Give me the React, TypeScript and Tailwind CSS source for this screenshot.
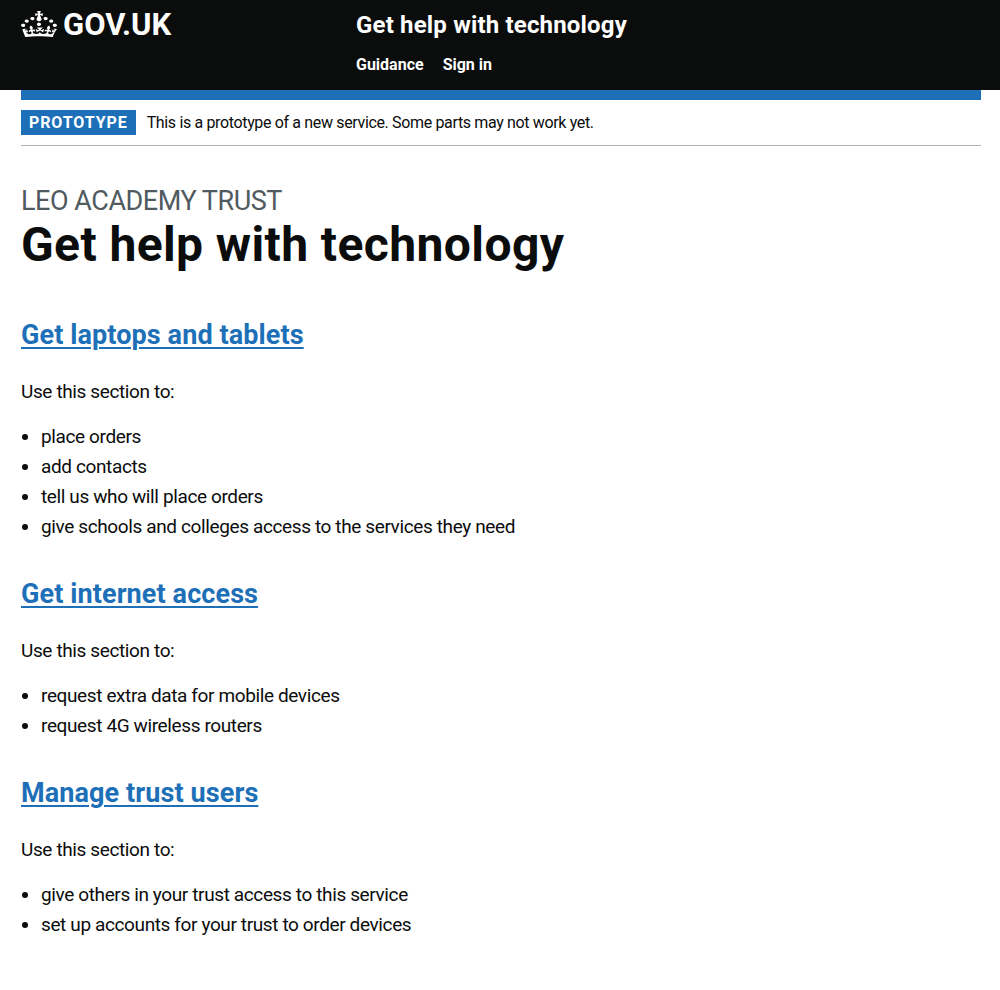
const Section = ({ title, items }: { title: string; items: string[] }) => (
  <section className="mb-[40px]">
    <h2 className="mb-[28px] text-[27px] leading-[31px] font-bold tracking-[0.1px]">
      <a href="#" className="text-[#1d70b8] underline decoration-2 underline-offset-[3px]">{title}</a>
    </h2>
    <p className="mb-[20px] text-[19px] leading-[25px] tracking-[-0.38px]">Use this section to:</p>
    <ul className="list-disc pl-5">
      {items.map((item) => (
        <li key={item} className="mb-[5px] text-[19px] leading-[25px] tracking-[-0.38px]">{item}</li>
      ))}
    </ul>
  </section>
);

const Crown = () => (
  <svg viewBox="0 0 32 30" className="mt-[1px] h-[26px] w-[36px]" preserveAspectRatio="none" fill="white">
    <path d="M22.6 10.4c-1 .4-2-.1-2.4-1-.4-.9.1-2 1-2.4.9-.4 2 .1 2.4 1s-.1 2-1 2.4m-5.9 6.7c-.9.4-2-.1-2.4-1-.4-.9.1-2 1-2.4.9-.4 2 .1 2.4 1s-.1 2-1 2.4m10.8-3.7c-1 .4-2-.1-2.4-1-.4-.9.1-2 1-2.4.9-.4 2 .1 2.4 1s0 2-1 2.4m3.3 4.8c-1 .4-2-.1-2.4-1-.4-.9.1-2 1-2.4.9-.4 2 .1 2.4 1s-.1 2-1 2.4M17 4.7l2.3 1.2V2.5l-2.3.7-.2-.2.9-3h-3.4l.9 3-.2.2c-.1.1-2.3-.7-2.3-.7v3.4L15 4.7c.1.1.1.2.2.2l-1.3 4c-.1.2-.1.4-.1.6 0 1.1.8 2 1.9 2.2h.7c1-.2 1.9-1.1 1.9-2.2 0-.2 0-.4-.1-.6l-1.3-4c-.1-.1 0-.2.1-.2m-7.6 5.7c.9.4 2-.1 2.4-1 .4-.9-.1-2-1-2.4-.9-.4-2 .1-2.4 1s0 2 1 2.4m-5 3c.9.4 2-.1 2.4-1 .4-.9-.1-2-1-2.4-.9-.4-2 .1-2.4 1s.1 2 1 2.4m-3.2 4.8c.9.4 2-.1 2.4-1 .4-.9-.1-2-1-2.4-.9-.4-2 .1-2.4 1s0 2 1 2.4m14.8 11c4.4 0 8.6.3 12.3.8 1.1-4.5 2.4-7 3.7-8.8l-2.5-.9c.2 1.3.3 1.9 0 2.7-.4-.4-.8-1.1-1.1-2.3l-1.2 4c.7-.5 1.3-.8 2-.9-1.1 2.5-2.6 3.1-3.5 3-1.1-.2-1.7-1.2-1.5-2.1.3-1.2 1.5-1.5 2.1-.1 1.1-2.3-.8-3-2-2.3 1.9-1.9 2.1-3.5.6-5.6-2.1 1.6-2.1 3.2-1.2 5.5-1.2-1.4-3.2-.6-2.5 1.6.9-1.4 2.1-.5 1.9.8-.2 1.1-1.7 2.1-3.5 1.9-2.7-.2-2.9-2.1-2.9-3.6.7-.1 1.9.5 2.9 1.9l1-4.3c-1.1 1.1-2.1 1.4-3.2 1.4.4-1.2 2.1-3 2.1-3h-5.4s1.7 1.9 2.1 3c-1.1 0-2.1-.2-3.2-1.4l1 4.3c1-1.4 2.2-2 2.9-1.9-.1 1.5-.2 3.4-2.9 3.6-1.9.2-3.4-.8-3.5-1.9-.2-1.3 1-2.2 1.9-.8.7-2.3-1.2-3-2.5-1.6.9-2.2.9-3.9-1.2-5.5-1.5 2-1.3 3.7.6 5.6-1.2-.7-3.1 0-2 2.3.6-1.4 1.8-1.1 2.1.1.2.9-.3 1.9-1.5 2.1-.9.2-2.4-.5-3.5-3 .6 0 1.2.3 2 .9l-1.2-4c-.3 1.1-.7 1.9-1.1 2.3-.3-.8-.2-1.4 0-2.7l-2.9.9C1.3 23 2.6 25.5 3.7 30c3.7-.5 7.9-.8 12.3-.8" />
  </svg>
);

export default function App() {
  return (
    <div className="min-h-[990px] bg-white font-['Roboto','Liberation_Sans',sans-serif] text-[#0b0c0c]">
      <header className="h-[90px] bg-[#0b0c0c] pr-[19px] pl-[21px] text-white">
        <div className="flex">
          <div className="flex w-[335px] items-start gap-[6px] pt-[10px] text-[31px] leading-[30px] font-bold">
            <Crown />
            GOV.UK
          </div>
          <div className="pt-[10px]">
            <div className="text-[24px] leading-[30px] font-bold tracking-[0.17px]">Get help with technology</div>
            <nav className="mt-[15px] flex gap-[19px] text-[16px] leading-[20px] font-bold">
              <a href="#">Guidance</a>
              <a href="#">Sign in</a>
            </nav>
          </div>
        </div>
      </header>
      <main className="pr-[19px] pl-[21px]">
        <div className="h-[10px] bg-[#1d70b8]" />
        <div className="flex h-[46px] items-start gap-[11px] border-b border-[#b1b4b6] pt-[10px]">
          <strong className="bg-[#1d70b8] px-2 text-[16px] leading-[25px] tracking-[0.9px] text-white">PROTOTYPE</strong>
          <span className="text-[16px] leading-[25px] tracking-[-0.35px]">This is a prototype of a new service. Some parts may not work yet.</span>
        </div>
        <div className="mt-[40px] text-[27px] leading-[30px] tracking-[-0.47px] text-[#505a5f]">LEO ACADEMY TRUST</div>
        <h1 className="mt-[1px] mb-[48px] text-[48px] leading-[55px] font-bold tracking-[0.4px]">Get help with technology</h1>
        <Section title="Get laptops and tablets" items={["place orders", "add contacts", "tell us who will place orders", "give schools and colleges access to the services they need"]} />
        <Section title="Get internet access" items={["request extra data for mobile devices", "request 4G wireless routers"]} />
        <Section title="Manage trust users" items={["give others in your trust access to this service", "set up accounts for your trust to order devices"]} />
      </main>
    </div>
  );
}
